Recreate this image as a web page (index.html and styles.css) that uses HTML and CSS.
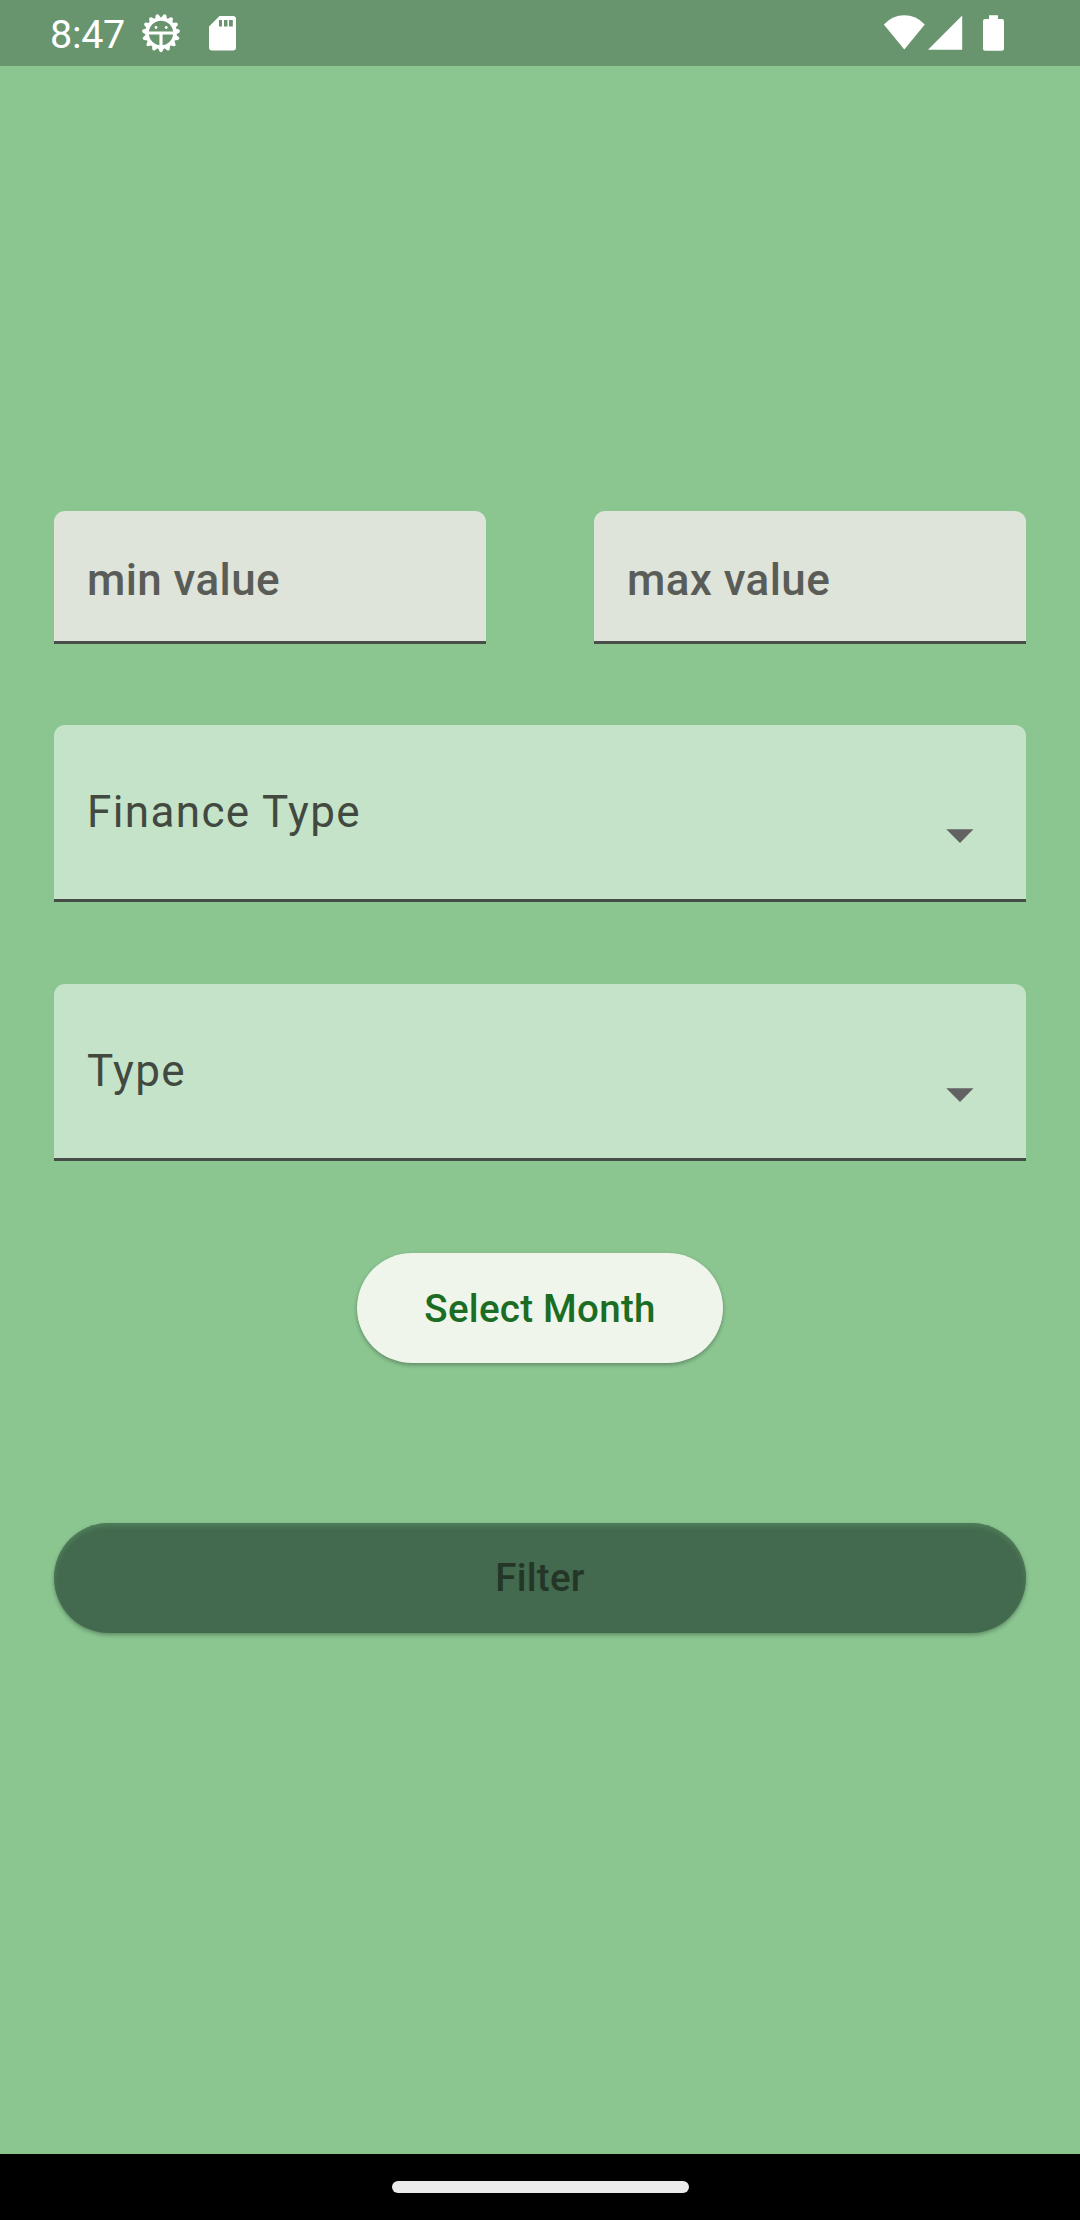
FILE: index.html
```html
<!DOCTYPE html>
<html lang="en">
<head>
<meta charset="utf-8">
<title>Filter</title>
<link rel="stylesheet" href="styles.css">
</head>
<body>
<div class="screen">
  <header class="status">
    <span class="clock">8:47</span>
    <svg class="gear" width="40" height="40" viewBox="-20 -20 40 40" fill="#fff">
      <defs>
        <path id="tooth" d="M-3 15-1.500 18.300Q0 20 1.500 18.300L3 15Z"/>
        <g id="teeth"><use href="#tooth"/><use href="#tooth" transform="rotate(24)"/><use href="#tooth" transform="rotate(48)"/><use href="#tooth" transform="rotate(72)"/><use href="#tooth" transform="rotate(96)"/></g>
      </defs>
      <circle r="14" fill="none" stroke="#fff" stroke-width="3.6"/>
      <use href="#teeth"/><use href="#teeth" transform="rotate(120)"/><use href="#teeth" transform="rotate(240)"/>
      <path d="M-13-1.400H13V1.600H1.600V13H-1.600V1.600H-13Z"/>
      <path d="M-8-11.500-7-10M8-11.500 7-10" stroke="#fff" stroke-width="1.2"/>
      <circle cx="-5" cy="-5.500" r="1.400"/>
      <circle cx="5.200" cy="-5.500" r="1.400"/>
    </svg>
    <svg class="sd" width="27" height="35" viewBox="0 0 27 35">
      <path fill="#fff" fill-rule="evenodd" d="M10.500 0H24a3 3 0 0 1 3 3V31.500a3 3 0 0 1-3 3H3a3 3 0 0 1-3-3V10.500ZM10 4V10.500H13V4ZM15 4V10.500H18.500V4ZM20 4V10.500H23.800V4Z"/>
    </svg>
    <span class="spacer"></span>
    <svg width="42" height="36" viewBox="0 0 42 36"><path fill="#fff" d="M.8 9.500Q9.500.3 21.300.3T41.800 9.500L21.300 34.600Z"/></svg>
    <svg class="signal" width="35" height="36" viewBox="0 0 35 36"><path fill="#fff" d="M34.200.5V34.800H0Z"/></svg>
    <svg class="battery" width="21" height="36" viewBox="0 0 21 36"><path fill="#fff" d="M6 .3H15V4H19a2 2 0 0 1 2 2V33.700a2 2 0 0 1-2 2H2a2 2 0 0 1-2-2V6a2 2 0 0 1 2-2H6Z"/></svg>
  </header>
  <main class="content">
    <div class="range">
      <div class="field"><span>min value</span></div>
      <div class="field"><span>max value</span></div>
    </div>
    <div class="select select-finance"><span>Finance Type</span>
      <svg class="arrow" width="28" height="14" viewBox="0 0 28 14"><path fill="#626262" d="M.3.300H27.500L14 14Z"/></svg>
    </div>
    <div class="select select-type"><span>Type</span>
      <svg class="arrow" width="28" height="14" viewBox="0 0 28 14"><path fill="#626262" d="M.3.300H27.500L14 14Z"/></svg>
    </div>
    <button class="btn month">Select Month</button>
    <button class="btn apply">Filter</button>
  </main>
  <footer class="nav"><div class="pill"></div></footer>
</div>
</body>
</html>
```
FILE: styles.css
```css
* { box-sizing: border-box; }
body { margin: 0; font-family: Roboto, sans-serif; }
svg { display: block; flex: none; }
.screen { width: 1080px; height: 2220px; display: flex; flex-direction: column; background: #8bc691; }
.status { height: 66px; flex: none; display: flex; align-items: flex-start; padding: 15px 76.500px 0 50px; background: #68946e; color: #fff; }
.clock { width: 91px; height: 40px; font-size: 39.5px; line-height: 40px; letter-spacing: -.3px; white-space: nowrap; }
.gear { margin-top: -2px; }
.sd { margin: 1px 0 0 28px; }
.spacer { flex: 1; }
.signal { margin-left: 3px; }
.battery { margin-left: 20px; }
.content { flex: 1; display: flex; flex-direction: column; padding: 444.5px 54px 0; }
.range { display: flex; gap: 108px; }
.field { flex: 1; height: 133.5px; padding: 8px 0 0 33px; display: flex; align-items: center; border-bottom: 3px solid #494e49; border-radius: 11px 11px 0 0; background: #dee4d9; color: #5a5d57; font-size: 44px; font-weight: 500; letter-spacing: .4px; }
.select { height: 177px; padding: 0 52px 0 33px; display: flex; justify-content: space-between; align-items: center; border-bottom: 3px solid #464d46; border-radius: 11px 11px 0 0; background: #c5e3c9; color: #424940; font-size: 44px; letter-spacing: 1.375px; }
.select-finance { margin-top: 81px; }
.select-type { margin-top: 82px; }
.arrow { margin-top: 48px; }
.btn { height: 110px; border: 0; border-radius: 55px; padding: 0; font-family: inherit; font-size: 38.5px; font-weight: 500; letter-spacing: .275px; }
.month { width: 366px; align-self: center; margin-top: 92px; background: #eff5eb; color: #1b6d24; box-shadow: 0 2px 4px rgba(0,0,0,.3); }
.apply { margin-top: 159.500px; background: #43694e; color: #233628; box-shadow: 0 2px 4px rgba(0,0,0,.3), inset 0 3px 5px #50805b; }
.nav { height: 66px; flex: none; display: flex; justify-content: center; padding: 27px 0 0; background: #000; }
.pill { width: 297px; height: 12px; border-radius: 6px; background: #ebebeb; }
```
